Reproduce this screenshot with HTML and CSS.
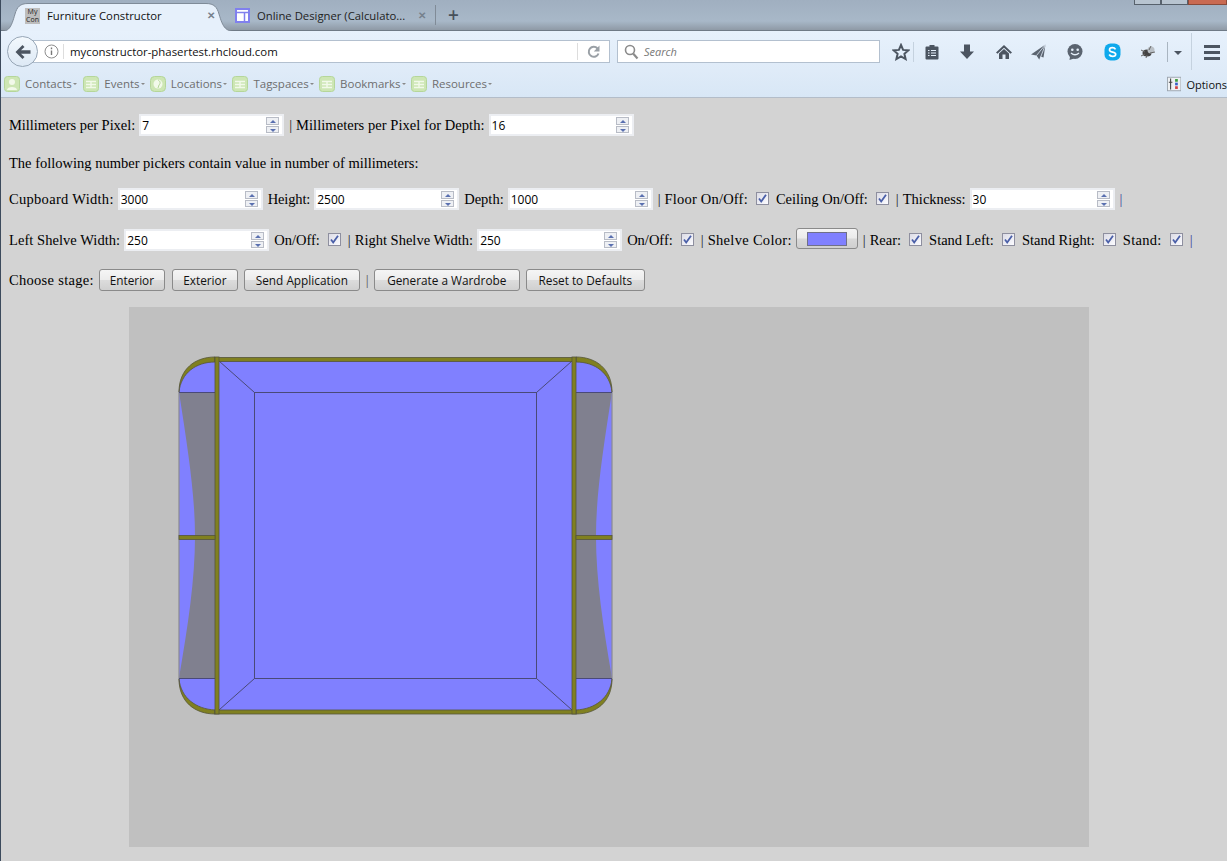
FILE: index.html
```html
<!DOCTYPE html>
<html lang="en">
<head>
<meta charset="utf-8">
<title>Furniture Constructor</title>
<link rel="stylesheet" href="styles.css">
</head>
<body>
<svg class="defs" width="0" height="0" aria-hidden="true">
  <symbol id="tick" viewBox="0 0 13 13"><path d="M3 6.5 L5.2 9.5 L10 2.8" fill="none" stroke="#4a5fa8" stroke-width="1.8"/></symbol>
  <symbol id="bm" viewBox="0 0 16 16"><rect x="0.5" y="0.5" width="15" height="15" rx="3" fill="#cde6b4" stroke="#b5d69a"/><path d="M3 5.5H13M3 8.5H13M3 11.5H13M8 5.5V11.5" stroke="#f2f9ea" stroke-width="1.4" fill="none"/></symbol>
</svg>
<header class="chrome">
  <div class="titlebar">
    <div class="winctl"><span class="wbtn"></span><span class="wbtn"></span><span class="wbtn close"></span></div>
    <svg class="tabshape" width="240" height="33" viewBox="0 0 240 33"><path d="M0 31.5C9 31.5 11 28 15 14C17 7 20 3.5 28 3.5H206C214 3.5 217 7 219 14C223 28 226 31.5 236 31.5Z" fill="#e6f0fb" stroke="#7f8b98"/></svg>
    <div class="tab active">
      <span class="fav-my">My<br>Con</span>
      <span class="tabtitle">Furniture Constructor</span>
      <span class="tabx">✕</span>
    </div>
    <div class="tab second">
      <svg class="fav" width="15" height="15" viewBox="0 0 15 15"><rect x="1" y="1" width="13" height="13" fill="#fff" stroke="#8080ee" stroke-width="2"/><path d="M1 4.5H14M9.5 4.5V14" stroke="#8080ee" stroke-width="1.5"/></svg>
      <span class="tabtitle">Online Designer (Calculato...</span>
      <span class="tabx">✕</span>
    </div>
    <span class="tabsep"></span>
    <span class="newtab">+</span>
  </div>
  <div class="navbar">
    <div class="backbtn"><svg width="18" height="16" viewBox="0 0 18 16"><path d="M8.5 1 L1.5 8 L8.5 15 L10.5 13 L7 9.7 H16.5 V6.3 H7 L10.5 3 Z" fill="#4c5561"/></svg></div>
    <div class="urlbar">
      <svg class="info" width="15" height="15" viewBox="0 0 15 15"><circle cx="7.5" cy="7.5" r="6.5" fill="none" stroke="#8d8d8d"/><path d="M7.5 6.5V11M7.5 3.5V5.2" stroke="#777" stroke-width="1.4"/></svg>
      <span class="urltext">myconstructor-phasertest.rhcloud.com</span>
      <span class="reload"><svg width="14" height="14" viewBox="0 0 14 14"><path d="M11.5 8.5A5 5 0 1 1 10.5 3.5" fill="none" stroke="#9aa0a6" stroke-width="2"/><path d="M12.5 0.5V6.5H6.8Z" fill="#9aa0a6"/></svg></span>
    </div>
    <div class="searchbar">
      <svg width="15" height="16" viewBox="0 0 15 16"><circle cx="6" cy="6" r="4.5" fill="none" stroke="#8b8b8b" stroke-width="1.6"/><path d="M9.3 9.8L13.5 14.5" stroke="#8b8b8b" stroke-width="2.2"/></svg>
      <span class="searchtext">Search</span>
    </div>
    <div class="tools">
      <svg class="ti t-star" width="18" height="18" viewBox="0 0 18 18"><path d="M9 2 L11.1 6.9 L16.4 7.3 L12.4 10.8 L13.6 16 L9 13.3 L4.4 16 L5.6 10.8 L1.6 7.3 L6.9 6.9 Z" fill="none" stroke="#4c5561" stroke-width="2"/></svg>
      <span class="tsep"></span>
      <svg class="ti t-clip" width="16" height="18" viewBox="0 0 16 18"><path d="M2.5 3.5H5.5V2H10.5V3.5H13.5A1 1 0 0 1 14.5 4.5V15.5A1 1 0 0 1 13.5 16.5H2.5A1 1 0 0 1 1.5 15.5V4.5A1 1 0 0 1 2.5 3.5Z" fill="#4c5561"/><path d="M4 7.5H5.5M7 7.5H12M4 10H5.5M7 10H12M4 12.5H5.5M7 12.5H12" stroke="#e6f0fb" stroke-width="1.2"/></svg>
      <svg class="ti t-down" width="16" height="18" viewBox="0 0 16 18"><path d="M5 1.5H11V8.5H15L8 16L1 8.5H5Z" fill="#4c5561"/></svg>
      <svg class="ti t-home" width="18" height="18" viewBox="0 0 18 18"><path d="M9 2 L17 9.5 L15.5 10.7 L9 4.8 L2.5 10.7 L1 9.5 Z" fill="#4c5561"/><path d="M4 10.5 L9 6 L14 10.5 V16 H10.5 V11.5 H7.5 V16 H4Z" fill="#4c5561"/></svg>
      <svg class="ti t-send" width="18" height="18" viewBox="0 0 18 18"><path d="M15.5 1.5 L1 11.5 L6.5 12.5 L9.5 17 L10.5 13.5 L13.5 14.5 Z" fill="#5b6470"/><path d="M6.5 12.5 L15.5 1.5 L9.5 17" fill="none" stroke="#dfeaf6" stroke-width="0.8"/></svg>
      <svg class="ti t-chat" width="18" height="18" viewBox="0 0 18 18"><circle cx="9" cy="8.5" r="7.5" fill="#5b6470"/><path d="M4 13.5 L3.5 17 L8 15.5Z" fill="#5b6470"/><circle cx="6.3" cy="6.8" r="1.3" fill="#e6f0fb"/><circle cx="11.7" cy="6.8" r="1.3" fill="#e6f0fb"/><path d="M5 10Q9 13.5 13 10" stroke="#e6f0fb" stroke-width="1.4" fill="none"/></svg>
      <svg class="ti t-skype" width="17" height="18" viewBox="0 0 17 18"><rect x="0.5" y="0.5" width="16" height="17" rx="6" fill="#0fa9ec"/><path d="M11.5 6.3C10.8 5 9.6 4.7 8.4 4.7C6.8 4.7 5.5 5.5 5.5 6.9C5.5 9.8 11.7 8.4 11.7 11.2C11.7 12.6 10.2 13.4 8.6 13.4C7.2 13.4 5.9 12.9 5.2 11.5" fill="none" stroke="#fff" stroke-width="1.7"/></svg>
      <svg class="ti t-bug" width="18" height="16" viewBox="0 0 18 16"><ellipse cx="8" cy="9" rx="4.5" ry="3.5" fill="#444"/><circle cx="12" cy="6" r="3.5" fill="#b9bfc5"/><path d="M2 6L6 8M2 12L6 10M7 14L8 11M12 2L10 6M16 8L11 9" stroke="#666" stroke-width="1"/></svg>
      <span class="tsep sep-b"></span>
      <span class="caret"></span>
      <span class="tsep sep-c"></span>
      <span class="burger"><i></i><i></i><i></i></span>
    </div>
  </div>
  <nav class="bookmarks">
    <span class="bm bm-first"><svg width="16" height="16" viewBox="0 0 16 16"><rect x="0.5" y="0.5" width="15" height="15" rx="3" fill="#cde6b4" stroke="#b5d69a"/><circle cx="8" cy="6" r="3" fill="#f2f9ea"/><path d="M3 14C3 10 13 10 13 14Z" fill="#f2f9ea"/></svg>Contacts<b></b></span>
    <span class="bm"><svg width="16" height="16"><use href="#bm"/></svg>Events<b></b></span>
    <span class="bm"><svg width="16" height="16" viewBox="0 0 16 16"><rect x="0.5" y="0.5" width="15" height="15" rx="4" fill="#cde6b4" stroke="#b5d69a"/><circle cx="8" cy="8" r="4.5" fill="#f2f9ea"/><path d="M8 4C10 5 11 7 9 9L8 12" stroke="#b5d69a" fill="none"/></svg>Locations<b></b></span>
    <span class="bm"><svg width="16" height="16"><use href="#bm"/></svg>Tagspaces<b></b></span>
    <span class="bm"><svg width="16" height="16"><use href="#bm"/></svg>Bookmarks<b></b></span>
    <span class="bm"><svg width="16" height="16"><use href="#bm"/></svg>Resources<b></b></span>
    <span class="options"><svg width="16" height="16" viewBox="0 0 16 16"><rect x="0.5" y="0.5" width="15" height="15" fill="#eef1f4" stroke="#9aa3ad"/><path d="M4 2V14M2 6H6" stroke="#444" stroke-width="1.2"/><rect x="9" y="2.5" width="3" height="3" fill="#3a9a3a"/><rect x="9" y="6.5" width="3" height="3" fill="#3a5fc8"/><rect x="9" y="10.5" width="3" height="3" fill="#d04040"/></svg>Options</span>
  </nav>
</header>

<main class="page">
  <div class="row r1">
    <span class="tight">Millimeters per Pixel:</span>
    <span class="num"><input class="numin" value="7" aria-label="Millimeters per Pixel"><span class="spin"><i class="up"></i><i class="dn"></i></span></span>
    <span class="bar after-in">|</span>
    <span class="slight">Millimeters per Pixel for Depth:</span>
    <span class="num"><input class="numin" value="16" aria-label="Millimeters per Pixel for Depth"><span class="spin"><i class="up"></i><i class="dn"></i></span></span>
  </div>
  <div class="row r2"><span>The following number pickers contain value in number of millimeters:</span></div>
  <div class="row r3">
    <span class="wide">Cupboard Width:</span>
    <span class="num"><input class="numin" value="3000" aria-label="Cupboard Width"><span class="spin"><i class="up"></i><i class="dn"></i></span></span>
    <span class="after-in narrow">Height:</span>
    <span class="num"><input class="numin" value="2500" aria-label="Height"><span class="spin"><i class="up"></i><i class="dn"></i></span></span>
    <span class="after-in">Depth:</span>
    <span class="num"><input class="numin" value="1000" aria-label="Depth"><span class="spin"><i class="up"></i><i class="dn"></i></span></span>
    <span class="bar after-in">|</span>
    <span class="mid">Floor On/Off:</span>
    <span class="cb"><svg width="13" height="13"><use href="#tick"/></svg></span>
    <span class="after-cb">Ceiling On/Off:</span>
    <span class="cb"><svg width="13" height="13"><use href="#tick"/></svg></span>
    <span class="bar after-cb">|</span>
    <span>Thickness:</span>
    <span class="num"><input class="numin" value="30" aria-label="Thickness"><span class="spin"><i class="up"></i><i class="dn"></i></span></span>
    <span class="bar blue after-in">|</span>
  </div>
  <div class="row r4">
    <span class="slight">Left Shelve Width:</span>
    <span class="num"><input class="numin" value="250" aria-label="Left Shelve Width"><span class="spin"><i class="up"></i><i class="dn"></i></span></span>
    <span class="after-in">On/Off:</span>
    <span class="cb"><svg width="13" height="13"><use href="#tick"/></svg></span>
    <span class="bar after-cb">|</span>
    <span>Right Shelve Width:</span>
    <span class="num"><input class="numin" value="250" aria-label="Right Shelve Width"><span class="spin"><i class="up"></i><i class="dn"></i></span></span>
    <span class="after-in">On/Off:</span>
    <span class="cb"><svg width="13" height="13"><use href="#tick"/></svg></span>
    <span class="bar after-cb">|</span>
    <span class="wide">Shelve Color:</span>
    <span class="colorbtn"><i></i></span>
    <span class="bar after-in">|</span>
    <span>Rear:</span>
    <span class="cb"><svg width="13" height="13"><use href="#tick"/></svg></span>
    <span class="after-cb">Stand Left:</span>
    <span class="cb"><svg width="13" height="13"><use href="#tick"/></svg></span>
    <span class="after-cb">Stand Right:</span>
    <span class="cb"><svg width="13" height="13"><use href="#tick"/></svg></span>
    <span class="after-cb wide">Stand:</span>
    <span class="cb"><svg width="13" height="13"><use href="#tick"/></svg></span>
    <span class="bar blue after-cb">|</span>
  </div>
  <div class="row r5">
    <span class="stagelabel">Choose stage:</span>
    <button class="btn b-a" type="button">Enterior</button>
    <button class="btn b-a b-gap" type="button">Exterior</button>
    <button class="btn b-b" type="button">Send Application</button>
    <span class="bar btnbar">|</span>
    <button class="btn b-c" type="button">Generate a Wardrobe</button>
    <button class="btn b-d" type="button">Reset to Defaults</button>
  </div>
  <div class="stage">
    <svg class="drawing" width="960" height="540" viewBox="129 307 960 540">
      <rect x="179" y="392" width="36" height="287" fill="#8080ff"/>
      <path d="M179 392C188 450 195 495 195 536C195 580 188 625 179 678V679H215V392Z" fill="#80808f"/>
      <rect x="576" y="392" width="36" height="287" fill="#8080ff"/>
      <path d="M612 392C603 450 596 495 596 536C596 580 603 625 612 678V679H576V392Z" fill="#80808f"/>
      <path d="M179 392V679M612 392V679" stroke="#8a8a92" stroke-width="1.2" fill="none"/>
      <path d="M179 392C179 372 195 361 215 361V392Z" fill="#8080ff"/>
      <path d="M612 392C612 372 596 361 576 361V392Z" fill="#8080ff"/>
      <path d="M179 679C179 698 195 710 215 710V679Z" fill="#8080ff"/>
      <path d="M612 679C612 698 596 710 576 710V679Z" fill="#8080ff"/>
      <path class="olive" d="M179 392C179 369 195 357 215 357V362C196 362 181 373 179 392Z"/>
      <path class="olive" d="M612 392C612 369 596 357 576 357V362C595 362 610 373 612 392Z"/>
      <path class="olive" d="M179 679C179 702 195 714 215 714V710C196 709 181 698 179 679Z"/>
      <path class="olive" d="M612 679C612 702 596 714 576 714V710C595 709 610 698 612 679Z"/>
      <rect x="219" y="361" width="353" height="349" fill="#8080ff"/>
      <rect class="thin" x="254.5" y="392.5" width="282" height="286"/>
      <path class="thin" d="M219 361L254.5 392.5M572 361L536.5 392.5M219 710L254.5 678.5M572 710L536.5 678.5"/>
      <path class="thin" d="M179 392.5H215M576 392.5H612M179 678.5H215M576 678.5H612"/>
      <rect class="olive" x="215" y="357.5" width="361" height="4"/>
      <rect class="olive" x="215" y="710" width="361" height="4"/>
      <rect class="olive" x="215" y="357" width="4" height="357"/>
      <rect class="olive" x="572" y="357" width="4" height="357"/>
      <rect class="olive" x="179" y="535.5" width="36" height="4"/>
      <rect class="olive" x="576" y="535.5" width="36" height="4"/>
    </svg>
  </div>
</main>
</body>
</html>
```

FILE: styles.css
```css
* { box-sizing: border-box; }
html, body { margin: 0; height: 100%; }
body { width: 1227px; height: 861px; overflow: hidden; background: #d3d3d3; font-family: "Liberation Serif", serif; font-size: 14.5px; color: #000; border-left: 1px solid #3c4a5c; }
.defs { position: absolute; }

/* browser chrome */
.chrome { height: 98px; margin-left: -1px; font-family: "Open Sans", sans-serif; border-bottom: 1px solid #b3bdc9; }
.titlebar { position: relative; height: 31px; display: flex; align-items: center; background: linear-gradient(#a0afc0 0, #a8b8c8 70%, #8f9aa6 100%); border-bottom: 1px solid #6f7a86; }
.winctl { position: absolute; top: 0; right: 0; display: flex; height: 5px; }
.wbtn { width: 27px; border: 1px solid #57616c; border-top: 0; background: #b8c4d0; }
.wbtn.close { width: 39px; background: #c96a52; border-color: #8a4a3a; }
.tabshape { position: absolute; left: 0; top: 0; }
.tab { position: relative; display: flex; align-items: center; height: 31px; font-size: 11.3px; }
.tab.active { margin-left: 25px; width: 199px; color: #111; }
.tab.second { margin-left: 11px; width: 200px; color: #222; }
.fav-my { width: 15px; height: 16px; background: #bdbdbd; font-size: 7px; line-height: 8px; text-align: center; color: #222; margin-top: 1px; }
.fav { flex: none; }
.tabtitle { margin-left: 7px; flex: 1; white-space: nowrap; }
.tabx { font-size: 10px; font-weight: bold; color: #76818d; margin-right: 9px; }
.tabsep { width: 1px; height: 20px; background: #808b97; margin-left: 0; }
.newtab { margin-left: 12px; font-size: 19px; font-weight: 600; line-height: 20px; color: #47505a; }

.navbar { height: 39px; position: relative; background: linear-gradient(#e7f1fc, #dfebf8); display: flex; align-items: center; padding: 2px 0 0 7px; }
.backbtn { position: relative; z-index: 1; width: 31px; height: 31px; border-radius: 50%; border: 1px solid #97a6b6; background: linear-gradient(#f3f8fd, #dde9f5); display: flex; align-items: center; justify-content: center; }
.urlbar { height: 23px; width: 579px; margin-left: -7px; background: #fff; border: 1px solid #b3c0cf; border-left: 0; display: flex; align-items: center; padding-left: 13px; position: relative; }
.info { flex: none; }
.urltext { margin-left: 4px; padding-left: 6px; border-left: 1px solid #ddd; font-size: 11.4px; line-height: 15px; color: #111; white-space: nowrap; }
.reload { position: absolute; right: 0; top: 2px; width: 32px; height: 17px; border-left: 1px solid #ddd; display: flex; align-items: center; justify-content: center; }
.searchbar { margin-left: 7px; height: 23px; width: 263px; background: #fff; border: 1px solid #b3c0cf; display: flex; align-items: center; padding-left: 6px; gap: 5px; font-size: 11px; font-style: italic; color: #777; }
.tools { position: relative; flex: 1; height: 38px; }
.ti { position: absolute; top: 10px; }
.t-star { left: 12px; }
.t-clip { left: 44px; }
.t-down { left: 79px; }
.t-home { left: 115px; }
.t-send { left: 150px; }
.t-chat { left: 186px; }
.t-skype { left: 224px; }
.t-bug { left: 259px; top: 11px; }
.tsep { position: absolute; left: 33px; top: 9px; width: 1px; height: 20px; background: #c5d2df; }
.tsep.sep-b { left: 287px; background: #a9b5c1; }
.tsep.sep-c { left: 311px; top: 0; height: 38px; }
.caret { position: absolute; left: 294px; top: 18px; border: 4px solid transparent; border-top-color: #4c5561; border-bottom: 0; }
.burger { position: absolute; left: 324px; top: 12px; width: 16px; display: flex; flex-direction: column; gap: 3px; }
.burger i { display: block; height: 3px; background: #4c5561; }

.bookmarks { height: 27px; background: linear-gradient(#dfebf8, #d8e7f6); display: flex; align-items: center; padding-left: 4px; font-size: 11.5px; color: #6e6e6e; position: relative; }
.bm { display: flex; align-items: center; gap: 5px; margin-right: 5.3px; white-space: nowrap; }
.bm-first { margin-right: 6.5px; }
.bm b { width: 0; height: 0; margin: 0 0 0 -4px; border: 2px solid transparent; border-top-color: #888; border-bottom: 0; }
.options { position: absolute; left: 1167px; top: 6px; width: 60px; overflow: hidden; display: flex; align-items: center; gap: 5px; color: #111; white-space: nowrap; font-size: 11px; }

/* page */
.page { padding: 16px 0 0 8px; }
.row { display: flex; align-items: center; gap: 4px; height: 22px; white-space: nowrap; }
.r1 { margin-bottom: 16px; }
.r2 { margin-bottom: 14px; }
.r3 { margin-bottom: 19px; }
.r4 { margin-bottom: 18px; }
.r5 { margin-bottom: 16px; }
.wide { letter-spacing: 0.3px; }
.mid { letter-spacing: 0.2px; }
.slight { letter-spacing: 0.05px; }
.tight { letter-spacing: -0.05px; }
.narrow { letter-spacing: -0.15px; }
.stagelabel { letter-spacing: 0.3px; margin-right: 1px; }
.num { position: relative; display: block; width: 145px; height: 22px; border: 2px solid #eceef2; background: #fff; }
.numin { display: block; width: 100%; height: 100%; padding: 0 18px 0 1px; border: 0; outline: 0; background: transparent; font-family: "Open Sans", sans-serif; font-size: 12px; color: #000; }
.spin { position: absolute; right: 3px; top: 1px; width: 13px; height: 16px; display: flex; flex-direction: column; gap: 1px; }
.spin i { position: relative; flex: 1; background: #eef0f4; border: 1px solid #b8bcc6; }
.spin i::after { content: ""; position: absolute; left: 3px; top: 2px; border: 3px solid transparent; border-top: 0; border-bottom: 3px solid #5a70b0; }
.spin i.dn::after { border-bottom: 0; border-top: 3px solid #5a70b0; }
.after-in { margin-left: 1px; }
.after-cb { margin-left: 3px; }
.bar { color: #222; }
.bar.blue { color: #3b3f9a; }
.cb { display: block; width: 13px; height: 13px; margin: 0 0 1px 4px; border: 1px solid #8e8f9f; background: linear-gradient(135deg, #dcdce6, #fbfbff); }
.cb svg { display: block; margin: -1px; }
.colorbtn { display: block; width: 62px; height: 21px; margin: -4px 0 0 0; padding: 3px 10px; border: 1px solid #8a8a8a; border-radius: 3px; background: linear-gradient(#f4f4f4 0, #ebebeb 48%, #d9d9d9 52%, #cfcfcf 100%); }
.colorbtn i { display: block; height: 14px; background: #8080ff; border: 1px solid #707088; }
.btn { height: 22px; padding: 0; border: 1px solid #8a8a8a; border-radius: 3px; background: linear-gradient(#f5f5f5 0, #ececec 48%, #dcdcdc 52%, #d0d0d0 100%); font-family: "Open Sans", sans-serif; font-size: 11.8px; color: #111; }
.b-a { width: 66px; }
.b-b { width: 116px; }
.b-c { width: 146px; }
.b-d { width: 119px; }
.row .btn + .btn { margin-left: 2px; }
.row .btn + .b-gap { margin-left: 3px; }
.btnbar { margin: 0 1px 0 2px; color: #555; }
.stage { width: 960px; height: 540px; margin-left: 120px; background: #c0c0c0; }
.drawing { display: block; }
.olive { fill: #808020; stroke: #55553a; stroke-width: 0.8; }
.thin { fill: none; stroke: #4a4a78; stroke-width: 1; }
```
